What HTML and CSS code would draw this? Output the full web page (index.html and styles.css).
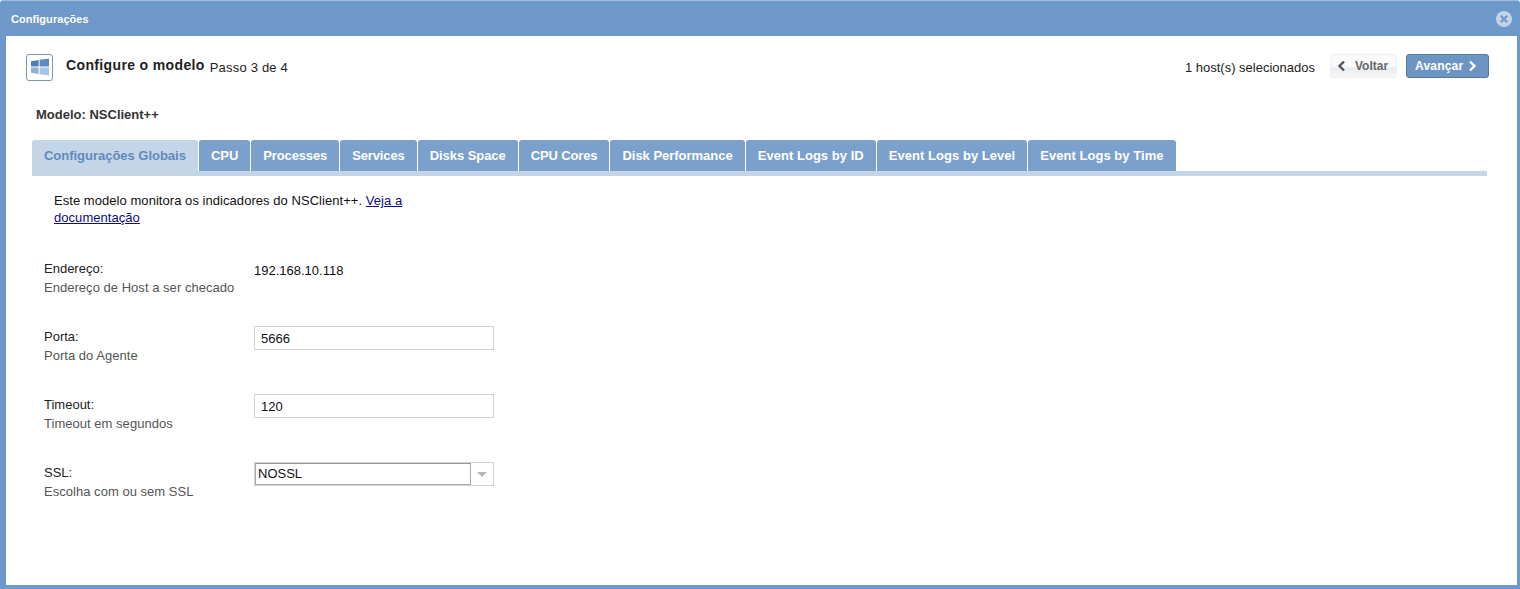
FILE: index.html
```html
<!DOCTYPE html>
<html lang="pt">
<head>
<meta charset="utf-8">
<title>Configurações</title>
<link rel="stylesheet" href="styles.css">
</head>
<body>
<div class="window">
  <header class="titlebar">
    <span class="title">Configurações</span>
    <svg class="close" width="16" height="16" viewBox="0 0 16 16"><circle cx="8" cy="8" r="8" fill="#c3d3e8"/><path d="M4.8 4.8l6.4 6.4M11.2 4.8l-6.4 6.4" stroke="#6f97c8" stroke-width="2.2" fill="none"/></svg>
  </header>
  <main class="content">
    <div class="wizard-head">
      <span class="logo">
        <svg width="20" height="20" viewBox="0 0 20 20"><path d="M1 4.2l7.6-1.2v6.5H1z" fill="#4f7fae"/><path d="M9.6 2.8L19 1.4v8.1H9.6z" fill="#5b8cbd"/><path d="M1 10.5h7.6V17L1 15.8z" fill="#8db2d8"/><path d="M9.6 10.5H19v8.1l-9.4-1.4z" fill="#a5c5e6"/></svg>
      </span>
      <h1 class="wizard-title">Configure o modelo</h1>
      <span class="step">Passo 3 de 4</span>
      <span class="hosts">1 host(s) selecionados</span>
      <button class="btn btn-back"><svg width="9" height="12" viewBox="0 0 9 12"><path d="M7 1.5L2.5 6 7 10.5" stroke="#555" stroke-width="2.4" fill="none"/></svg>Voltar</button>
      <button class="btn btn-next">Avançar<svg width="9" height="12" viewBox="0 0 9 12"><path d="M2 1.5L6.5 6 2 10.5" stroke="#fff" stroke-width="2.4" fill="none"/></svg></button>
    </div>
    <div class="model">Modelo: NSClient++</div>
    <nav class="tabs">
      <a class="tab active">Configurações Globais</a>
      <a class="tab">CPU</a>
      <a class="tab tight">Processes</a>
      <a class="tab tight">Services</a>
      <a class="tab mid">Disks Space</a>
      <a class="tab tight">CPU Cores</a>
      <a class="tab">Disk Performance</a>
      <a class="tab wide">Event Logs by ID</a>
      <a class="tab wide">Event Logs by Level</a>
      <a class="tab wide">Event Logs by Time</a>
    </nav>
    <p class="intro">Este modelo monitora os indicadores do NSClient++. <a href="#">Veja a documentação</a></p>
    <div class="form">
      <div class="row">
        <div class="label">Endereço:<small>Endereço de Host a ser checado</small></div>
        <div class="value">192.168.10.118</div>
      </div>
      <div class="row">
        <div class="label">Porta:<small>Porta do Agente</small></div>
        <input class="input" type="text" value="5666">
      </div>
      <div class="row">
        <div class="label">Timeout:<small>Timeout em segundos</small></div>
        <input class="input" type="text" value="120">
      </div>
      <div class="row">
        <div class="label">SSL:<small>Escolha com ou sem SSL</small></div>
        <div class="combo"><span class="combo-text">NOSSL</span><span class="combo-arrow"></span></div>
      </div>
    </div>
  </main>
</div>
</body>
</html>
```
FILE: styles.css
```css
* { box-sizing: border-box; }
html, body { margin: 0; height: 100%; overflow: hidden; }
body { font-family: "Liberation Sans", Arial, sans-serif; font-size: 13px; color: #111; background: #fff; }
.window { height: 589px; display: flex; flex-direction: column; background: #6e98ca; border-top: 1px solid #a3bcdc; padding: 0 3px 4px 6px; border-radius: 3px 3px 0 0; }
.titlebar { height: 35px; margin-left: -1px; padding: 0 5px 0 6px; display: flex; align-items: center; justify-content: space-between; color: #fff; }
.title { font-size: 11px; font-weight: bold; letter-spacing: .05px; }
.content { flex: 1; background: #fff; padding: 18px 28px 0 20px; }
.wizard-head { display: flex; align-items: center; height: 26px; }
.logo { width: 27px; height: 27px; border: 1px solid #7c96b0; border-radius: 3px; display: flex; align-items: center; justify-content: center; margin-right: 13px; }
.wizard-title { margin: -4px 5px 0 0; font-size: 14px; font-weight: bold; color: #222; letter-spacing: .36px; }
.step { color: #222; letter-spacing: .2px; }
.hosts { margin-left: auto; margin-right: 15px; color: #222; }
.btn { height: 24px; border-radius: 3px; font: bold 12px "Liberation Sans", Arial, sans-serif; display: flex; align-items: center; padding: 0; margin-top: -2px; }
.btn-back { width: 67px; margin-right: 9px; padding-left: 6px; gap: 9px; color: #666; border: 1px solid #eef0f2; background: linear-gradient(#fafafa 0, #fafafa 50%, #e9edef 62%, #f8f9fa 100%); }
.btn-next { width: 83px; padding-left: 8px; gap: 5px; color: #fff; border: 1px solid #54799f; background: #6d95c4; letter-spacing: .2px; }
.model { margin: 27px 0 0 10px; font-weight: bold; color: #333; font-size: 13px; height: 33px; line-height: 16px; }
.tabs { display: flex; gap: 1px; margin: 0 2px 0 6px; height: 36px; border-bottom: 5px solid #c4d5e8; }
.tab { height: 31px; padding: 0 12px; line-height: 31px; font-size: 13px; font-weight: bold; color: #fff; background: #7aa0cb; border-radius: 3px 3px 0 0; white-space: nowrap; letter-spacing: -.02px; }
.tab.tight { letter-spacing: -.13px; }
.tab.mid { letter-spacing: -.05px; }
.tab.wide { letter-spacing: .04px; }
.tab.active { height: 36px; color: #5f8bbe; background: #c4d5e8; }
.intro { width: 370px; margin: 16px 0 0 28px; line-height: 17px; color: #111; letter-spacing: .05px; }
.intro a { color: #0a0a8c; }
.form { margin: 34px 0 0 18px; }
.row { display: flex; align-items: flex-start; height: 68px; }
.label { width: 210px; line-height: 18px; color: #222; }
.label small { display: block; margin-top: 1px; font-size: 13px; color: #555; letter-spacing: .03px; }
.value { line-height: 18px; margin-top: 2px; }
.input { width: 240px; height: 24px; margin-top: -2px; padding: 0 6px; border: 1px solid #d2d2d2; font: 13px "Liberation Sans", Arial, sans-serif; color: #111; outline: none; }
.combo { width: 240px; height: 24px; margin-top: -2px; border: 1px solid #d2d2d2; display: flex; }
.combo-text { width: 216px; height: 22px; border: 1px solid #aaa; border-top-color: #999; padding-left: 2px; line-height: 20px; font-size: 13px; }
.combo-arrow { flex: 1; position: relative; }
.combo-arrow::after { content: ""; position: absolute; left: 6px; top: 9px; border: 5px solid transparent; border-top: 5px solid #b5b5b5; border-bottom: 0; }
```
